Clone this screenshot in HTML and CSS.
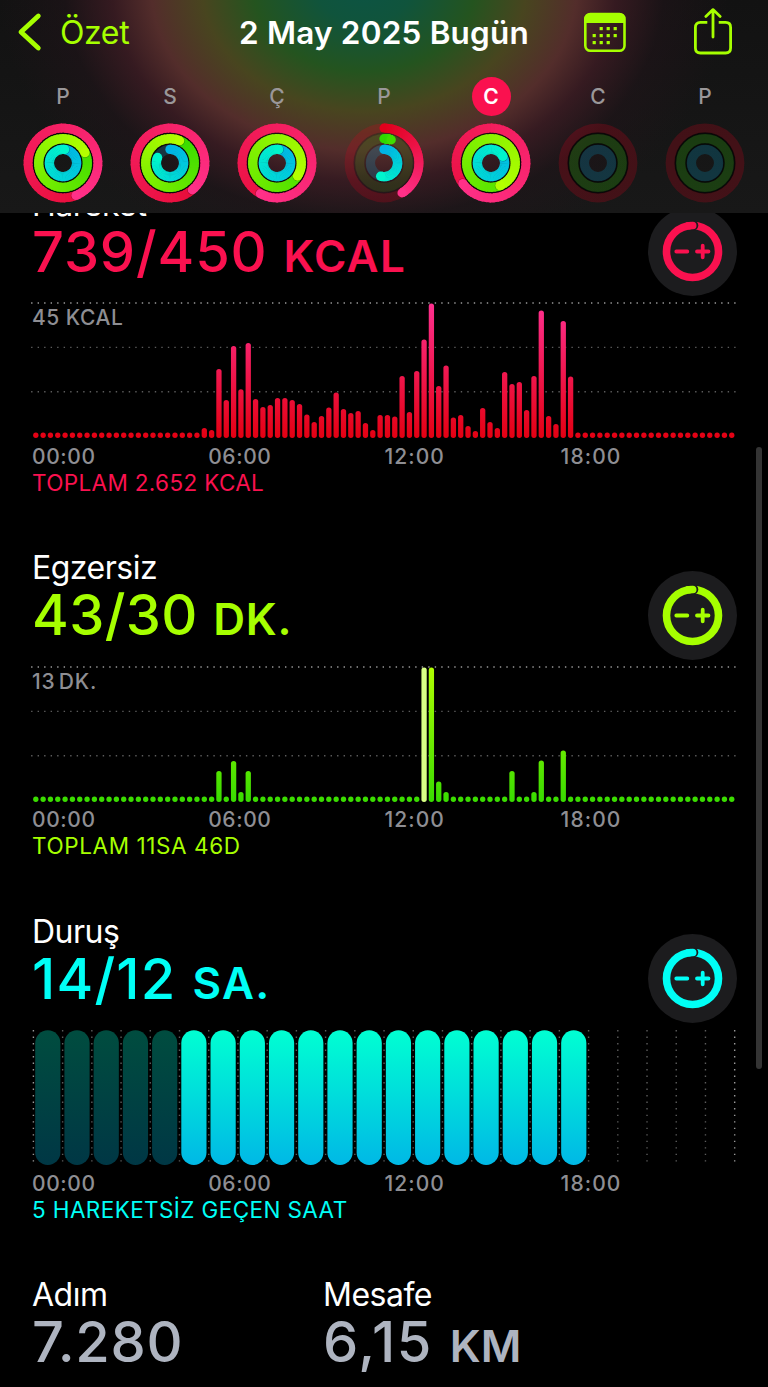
FILE: index.html
```html
<!DOCTYPE html>
<html lang="tr">
<head>
  <meta charset="UTF-8">
  <title>Özet</title>
  <link rel="stylesheet" href="styles.css">
</head>
<body>

<header class="top">
  <nav class="nav">
    <a class="back" href="#">
      <svg width="24" height="40" viewBox="0 0 24 40"><path d="M20.3 4 L3 20 L20.3 36" fill="none" stroke="currentColor" stroke-width="4.8" stroke-linecap="round" stroke-linejoin="round"/></svg>
      <span>Özet</span>
    </a>
    <h1>2 May 2025 Bugün</h1>
    <div class="actions">
      <svg width="42" height="40" viewBox="0 0 42 40">
        <rect x="1.3" y="2" width="39.2" height="36.8" rx="5" fill="none" stroke="currentColor" stroke-width="2.6"/>
        <path d="M1 11 V6.5 Q1 1.5 6 1.5 H36 Q41 1.5 41 6.5 V11 Z" fill="currentColor"/>
        <g fill="currentColor">
          <rect x="15.6" y="15" width="3.2" height="3.2"/><rect x="22.6" y="15" width="3.2" height="3.2"/><rect x="29.6" y="15" width="3.2" height="3.2"/>
          <rect x="8.6" y="22" width="3.2" height="3.2"/><rect x="15.6" y="22" width="3.2" height="3.2"/><rect x="22.6" y="22" width="3.2" height="3.2"/><rect x="29.6" y="22" width="3.2" height="3.2"/>
          <rect x="8.6" y="29" width="3.2" height="3.2"/><rect x="15.6" y="29" width="3.2" height="3.2"/><rect x="22.6" y="29" width="3.2" height="3.2"/>
        </g>
      </svg>
      <svg width="38" height="48" viewBox="0 0 38 48" fill="none" stroke="currentColor" stroke-width="2.8" stroke-linecap="round" stroke-linejoin="round">
        <path d="M13.3 14.4 H6.4 Q1.4 14.4 1.4 19.4 V40 Q1.4 45 6.4 45 H31.6 Q36.6 45 36.6 40 V19.4 Q36.6 14.4 31.6 14.4 H24.7" stroke-linecap="butt"/>
        <path d="M19 29 V2 M11.8 8.4 L19 1.6 L26.2 8.4"/>
      </svg>
    </div>
  </nav>
  <div class="week" id="week"></div>
</header>

<main>
  <section class="metric move">
    <h2>Hareket</h2>
    <p class="value">739/450 <span>KCAL</span></p>
    <button class="goal"></button>
    <div class="chart" id="moveChart"><span class="max">45 KCAL</span></div>
    <div class="axis"><span>00:00</span><span>06:00</span><span>12:00</span><span>18:00</span></div>
    <p class="total">TOPLAM 2.652 KCAL</p>
  </section>

  <section class="metric exercise">
    <h2>Egzersiz</h2>
    <p class="value">43/30 <span>DK.</span></p>
    <button class="goal"></button>
    <div class="chart" id="exerciseChart"><span class="max narrow">13 DK.</span></div>
    <div class="axis"><span>00:00</span><span>06:00</span><span>12:00</span><span>18:00</span></div>
    <p class="total">TOPLAM 11SA 46D</p>
  </section>

  <section class="metric stand">
    <h2>Duruş</h2>
    <p class="value">14/12 <span>SA.</span></p>
    <button class="goal"></button>
    <div class="chart" id="standChart"></div>
    <div class="axis"><span>00:00</span><span>06:00</span><span>12:00</span><span>18:00</span></div>
    <p class="total">5 HAREKETSİZ GEÇEN SAAT</p>
  </section>

  <section class="stats">
    <div class="steps">
      <h2>Adım</h2>
      <p class="value">7.280</p>
    </div>
    <div class="distance">
      <h2>Mesafe</h2>
      <p class="value">6,15 <span>KM</span></p>
    </div>
  </section>
</main>

<div class="scrollbar"></div>

<script src="script.js"></script>
</body>
</html>
```
FILE: styles.css
```css
* {
  box-sizing: border-box;
}

body {
  margin: 0;
  height: 1387px;
  overflow: hidden;
  background: #000;
  color: #fff;
  font-family: Inter, "Liberation Sans", sans-serif;
}

h1, h2, p {
  margin: 0;
  font-weight: 400;
  white-space: nowrap;
}

svg {
  display: block;
  overflow: visible;
}

/* header */
.top {
  position: fixed;
  top: 0;
  left: 0;
  z-index: 2;
  width: 768px;
  height: 212.5px;
  background:
    radial-gradient(ellipse 300px 232px at 364px -14px, #0c5444 0%, #10543c 16%, #24541f 37%, #48451f 54%, #532d2b 71%, rgba(62, 28, 36, 0.8) 84%, rgba(34, 20, 26, 0.5) 100%, rgba(18, 18, 18, 0) 122%),
    linear-gradient(#121212, #181818);
}

.nav {
  display: grid;
  grid-template-columns: 1fr auto 1fr;
  align-items: center;
  height: 64px;
  padding: 0 36px;
  color: #a6ff00;
}

.back {
  display: flex;
  align-items: center;
  gap: 18px;
  margin-left: -18px;
  color: inherit;
  font-size: 32px;
  letter-spacing: -0.4px;
  text-decoration: none;
}

.nav h1 {
  color: #fff;
  font-size: 31.5px;
  font-weight: 600;
  letter-spacing: 0.2px;
}

.actions {
  display: flex;
  align-items: center;
  justify-content: flex-end;
  gap: 68px;
}

.week {
  display: grid;
  grid-template-columns: repeat(7, 107px);
  padding-left: 9.5px;
  margin-top: 13px;
}

.day {
  display: flex;
  flex-direction: column;
  align-items: center;
  gap: 7px;
}

.day span {
  width: 39px;
  height: 39px;
  border-radius: 50%;
  color: #9a9799;
  font-size: 21px;
  font-weight: 500;
  line-height: 39px;
  text-align: center;
}

.day.today span {
  background: #fa114f;
  color: #fff;
  font-weight: 600;
}

/* metrics */
main {
  padding: 184.9px 32px 0;
}

.metric {
  position: relative;
  height: 363.5px;
}

h2 {
  height: 37px;
  font-size: 32px;
  line-height: 39.6px;
  letter-spacing: -0.5px;
}

.value {
  height: 60px;
  font-size: 56px;
  font-weight: 500;
  line-height: 61px;
  color: var(--tint);
}

.value span {
  font-size: 44px;
  font-weight: 600;
  line-height: 1;
  letter-spacing: 1.3px;
}

.move { --tint: #fa114f; }
.exercise { --tint: #a6ff00; }
.stand { --tint: #00fff6; }
.stats { --tint: #aeb4c0; }

.move .value { letter-spacing: 0.85px; }
.exercise .value { letter-spacing: 0.4px; }
.exercise .value span { letter-spacing: 0.8px; }
.stand .value { letter-spacing: 1.2px; }
.steps .value { letter-spacing: 0.7px; }
.distance .value { letter-spacing: 1.7px; }
.distance .value span { letter-spacing: 0; }

/* goal button sits over the right end of the heading */
.goal {
  position: absolute;
  top: 22.3px;
  right: -0.5px;
  width: 89px;
  height: 89px;
  padding: 0;
  border: none;
  border-radius: 50%;
  background: #1c1c1e;
  color: var(--tint);
}

.chart {
  position: relative;
  height: 136px;
  margin-top: 20.6px;
}

.max {
  position: absolute;
  top: 2.8px;
  left: 0;
  color: #8e8e93;
  font-size: 21px;
  font-weight: 500;
  line-height: 26px;
  letter-spacing: 0.5px;
}

.max.narrow {
  letter-spacing: 0.9px;
  word-spacing: -3.5px;
}

.axis {
  display: grid;
  grid-template-columns: repeat(4, 176.2px);
  margin-top: 5.2px;
  color: #8e8e93;
  font-size: 21px;
  font-weight: 500;
  line-height: 26px;
  letter-spacing: 0.6px;
}

.axis span:nth-child(n+3) {
  letter-spacing: 1.1px;
}

.total {
  color: var(--tint);
  font-size: 22.5px;
  line-height: 25.6px;
  letter-spacing: 0.35px;
}

.exercise .total { letter-spacing: 0.6px; }
.stand .total { letter-spacing: 0.4px; }

.stats {
  display: grid;
  grid-template-columns: 291px auto;
}

.scrollbar {
  position: fixed;
  top: 447px;
  right: 6px;
  width: 6px;
  height: 622px;
  border-radius: 3px;
  background: #343434;
}
```
FILE: script.js
```js
const RED = ['#e0001c', '#ff3088'];
const GREEN = ['#2fd800', '#b4ff00'];
const BLUE = ['#00b4e6', '#00f5cc'];

function mix(a, b, t) {
  const ch = (c, i) => parseInt(c.substr(1 + i * 2, 2), 16);
  return 'rgb(' + [0, 1, 2].map(i => Math.round(ch(a, i) + (ch(b, i) - ch(a, i)) * t)).join(',') + ')';
}

function point(r, turn) {
  const a = turn * Math.PI * 2;
  return [(Math.sin(a) * r).toFixed(2), (-Math.cos(a) * r).toFixed(2)];
}

// one activity ring, amount 1 = full circle
function ring(r, w, amount, colors, dim) {
  let out = `<circle r="${r}" fill="none" stroke="${colors[0]}" stroke-width="${w}" opacity="${dim}"/>`;
  if (!amount) return out;
  const from = Math.max(0, amount - 1);
  const scale = Math.max(amount, 0.4);
  const steps = 60;
  if (amount < 1) {
    const [x, y] = point(r, 0);
    out += `<circle cx="${x}" cy="${y}" r="${w / 2}" fill="${colors[0]}"/>`;
  }
  for (let i = 0; i < steps; i++) {
    const t0 = from + (amount - from) * i / steps;
    const t1 = Math.min(amount, from + (amount - from) * (i + 1) / steps + 0.006);
    const [x0, y0] = point(r, t0);
    const [x1, y1] = point(r, t1);
    out += `<path d="M${x0} ${y0} A${r} ${r} 0 0 1 ${x1} ${y1}" fill="none" stroke="${mix(colors[0], colors[1], t0 / scale)}" stroke-width="${w}"/>`;
  }
  if (amount >= 1) {
    const [sx, sy] = point(r, amount + 0.12 / r);
    out += `<circle cx="${sx}" cy="${sy}" r="${w / 2 - 0.2}" fill="#000" opacity="0.3"/>`;
  }
  const [ex, ey] = point(r, amount);
  out += `<circle cx="${ex}" cy="${ey}" r="${w / 2}" fill="${mix(colors[0], colors[1], amount / scale)}"/>`;
  return out;
}

const days = [
  { name: 'P', rings: [1.44, 1.18, 1.02] },
  { name: 'S', rings: [1.39, 1.065, 0.817] },
  { name: 'Ç', rings: [1.58, 1.34, 1.02] },
  { name: 'P', rings: [0.414, 0.048, 0.54], open: true },
  { name: 'C', rings: [1.65, 1.44, 1.17], today: true },
  { name: 'C', rings: [0, 0, 0] },
  { name: 'P', rings: [0, 0, 0] }
];

document.getElementById('week').innerHTML = days.map(d => `
  <div class="day${d.today ? ' today' : ''}">
    <span>${d.name}</span>
    <svg width="80" height="80" viewBox="-40 -40 80 80">
      <circle r="29.7" fill="none" stroke="#000" stroke-width="2" opacity="${d.open ? 0.15 : 0.6}"/>
      <circle r="18.9" fill="none" stroke="#000" stroke-width="2" opacity="${d.open ? 0.15 : 0.6}"/>
      ${ring(34.9, 9, d.rings[0], RED, 0.22)}
      ${ring(24.3, 9.3, d.rings[1], GREEN, d.open ? 0.12 : 0.2)}
      ${ring(13.6, 9.3, d.rings[2], BLUE, 0.2)}
    </svg>
  </div>`).join('');

// plus / minus goal buttons
document.querySelectorAll('.goal').forEach(b => {
  b.innerHTML = `<svg width="89" height="89" viewBox="-44.5 -44.5 89 89" fill="none" stroke="currentColor">
    <circle r="26" stroke-width="7.6"/>
    <circle cx="1" cy="-26" r="4.8" fill="#1c1c1e" stroke="none"/>
    <path d="M-4 -25.7 L0.2 -26" stroke-width="7.6" stroke-linecap="round"/>
    <path d="M-16.2 0 H-5.2 M4.5 0 H16 M10.2 -5.8 V5.8" stroke-width="3.8" stroke-linecap="round"/>
  </svg>`;
});

// bar charts, one value for every 15 minutes, starting at slot 23
const move = [10, 8, 69, 38, 92, 48.7, 95, 39, 31, 33, 40, 40, 38, 34, 23.5, 16, 22, 30.5, 45.5, 29, 25, 27, 15, 8, 23,
  23, 21.5, 62, 26, 67, 98.5, 134.5, 52, 72.5, 20.5, 23, 12, 7, 30, 16, 10, 66, 54, 56, 28, 62, 127.5, 22, 14, 117, 61.5];
const exercise = { 25: 31, 27: 41, 28: 10, 29: 31, 53: 134.5, 54: 134.5, 55: 20.5, 56: 10, 65: 31, 68: 10, 69: 41.5, 72: 51.5 };

function barChart(id, height, colors, highlight) {
  let out = `<svg width="704" height="136" viewBox="0 0 704 136">
    <defs><linearGradient id="${id}Fill" gradientUnits="userSpaceOnUse" x1="0" y1="136" x2="0" y2="1">
      <stop offset="0" stop-color="${colors[0]}"/><stop offset="1" stop-color="${colors[1]}"/></linearGradient></defs>`;
  [1, 45.4, 89.7].forEach((y, i) => {
    out += `<path d="M-0.9 ${y} H705" stroke="${i ? '#5c5c5c' : '#999'}" stroke-width="1.4" stroke-dasharray="1.4 5.11"/>`;
  });
  for (let i = 0; i < 96; i++) {
    const h = height(i) || 5.3;
    const x = 3.8 + i * 7.326;
    out += `<rect x="${(x - 2.65).toFixed(2)}" y="${(135.9 - h).toFixed(1)}" width="5.3" height="${h}" rx="2.6" fill="${i === highlight ? '#d8ff85' : `url(#${id}Fill)`}"/>`;
  }
  document.getElementById(id).insertAdjacentHTML('afterbegin', out + '</svg>');
}

barChart('moveChart', i => move[i - 23], ['#e30012', '#ff3090']);
barChart('exerciseChart', i => exercise[i], ['#38dc00', '#b0ff00'], 53);

// stand hours
let stand = `<svg width="704" height="136" viewBox="0 0 704 136">
  <defs><linearGradient id="standFill" x1="0" y1="0" x2="0" y2="1">
    <stop offset="0" stop-color="#00ffd2"/><stop offset="1" stop-color="#00b8e6"/></linearGradient></defs>`;
for (let i = 0; i <= 24; i++) {
  const x = (1.4 + i * 29.22).toFixed(2);
  stand += `<path d="M${x} 1 V134" stroke="${i % 24 ? '#5c5c5c' : '#999'}" stroke-width="1.4" stroke-dasharray="1.4 5.11"/>`;
}
for (let i = 0; i < 19; i++) {
  const x = (3.2 + i * 29.22).toFixed(2);
  stand += `<rect x="${x}" y="1.2" width="25.2" height="134.8" rx="12.6" fill="#000"/>
    <rect x="${x}" y="1.2" width="25.2" height="134.8" rx="12.6" fill="url(#standFill)" opacity="${i < 5 ? 0.3 : 1}"/>`;
}
document.getElementById('standChart').innerHTML = stand + '</svg>';
```
